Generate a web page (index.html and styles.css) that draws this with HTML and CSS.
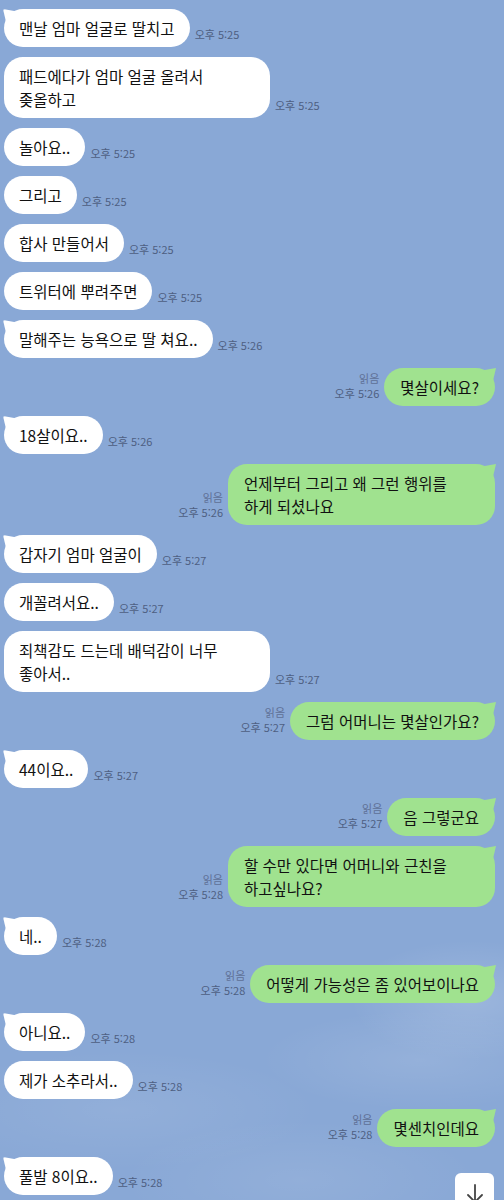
FILE: index.html
```html
<!DOCTYPE html>
<html lang="ko">
<head>
<meta charset="utf-8">
<link rel="stylesheet" href="styles.css">
</head>
<body>
<div class="chat">
  <div class="row in"><div class="bubble tail">맨날 엄마 얼굴로 딸치고</div><div class="meta"><span class="time">오후 5:25</span></div></div>
  <div class="row in"><div class="bubble wide">패드에다가 엄마 얼굴 올려서<br>좆올하고</div><div class="meta"><span class="time">오후 5:25</span></div></div>
  <div class="row in"><div class="bubble">놀아요..</div><div class="meta"><span class="time">오후 5:25</span></div></div>
  <div class="row in"><div class="bubble">그리고</div><div class="meta"><span class="time">오후 5:25</span></div></div>
  <div class="row in"><div class="bubble">합사 만들어서</div><div class="meta"><span class="time">오후 5:25</span></div></div>
  <div class="row in"><div class="bubble">트위터에 뿌려주면</div><div class="meta"><span class="time">오후 5:25</span></div></div>
  <div class="row in"><div class="bubble tail">말해주는 능욕으로 딸 쳐요..</div><div class="meta"><span class="time">오후 5:26</span></div></div>
  <div class="row out"><div class="meta"><span class="read">읽음</span><span class="time">오후 5:26</span></div><div class="bubble tail">몇살이세요?</div></div>
  <div class="row in"><div class="bubble tail">18살이요..</div><div class="meta"><span class="time">오후 5:26</span></div></div>
  <div class="row out"><div class="meta"><span class="read">읽음</span><span class="time">오후 5:26</span></div><div class="bubble tail wide">언제부터 그리고 왜 그런 행위를<br>하게 되셨나요</div></div>
  <div class="row in"><div class="bubble tail">갑자기 엄마 얼굴이</div><div class="meta"><span class="time">오후 5:27</span></div></div>
  <div class="row in"><div class="bubble">개꼴려서요..</div><div class="meta"><span class="time">오후 5:27</span></div></div>
  <div class="row in"><div class="bubble wide">죄책감도 드는데 배덕감이 너무<br>좋아서..</div><div class="meta"><span class="time">오후 5:27</span></div></div>
  <div class="row out"><div class="meta"><span class="read">읽음</span><span class="time">오후 5:27</span></div><div class="bubble tail">그럼 어머니는 몇살인가요?</div></div>
  <div class="row in"><div class="bubble tail">44이요..</div><div class="meta"><span class="time">오후 5:27</span></div></div>
  <div class="row out"><div class="meta"><span class="read">읽음</span><span class="time">오후 5:27</span></div><div class="bubble tail">음 그렇군요</div></div>
  <div class="row out"><div class="meta"><span class="read">읽음</span><span class="time">오후 5:28</span></div><div class="bubble tail wide">할 수만 있다면 어머니와 근친을<br>하고싶나요?</div></div>
  <div class="row in"><div class="bubble tail">네..</div><div class="meta"><span class="time">오후 5:28</span></div></div>
  <div class="row out"><div class="meta"><span class="read">읽음</span><span class="time">오후 5:28</span></div><div class="bubble tail">어떻게 가능성은 좀 있어보이나요</div></div>
  <div class="row in"><div class="bubble tail">아니요..</div><div class="meta"><span class="time">오후 5:28</span></div></div>
  <div class="row in"><div class="bubble">제가 소추라서..</div><div class="meta"><span class="time">오후 5:28</span></div></div>
  <div class="row out"><div class="meta"><span class="read">읽음</span><span class="time">오후 5:28</span></div><div class="bubble tail">몇센치인데요</div></div>
  <div class="row in"><div class="bubble tail">풀발 8이요..</div><div class="meta"><span class="time">오후 5:28</span></div></div>
</div>
<button class="scroll-down" aria-label="아래로">
  <svg width="20" height="22" viewBox="0 0 20 22"><path d="M10 2 V19 M3 12 L10 19 L17 12" fill="none" stroke="#444" stroke-width="1.8" stroke-linecap="round" stroke-linejoin="round"/></svg>
</button>
</body>
</html>
```

FILE: styles.css
```css
html, body {
  margin: 0;
  padding: 0;
}
body {
  width: 504px;
  height: 1200px;
  overflow: hidden;
  position: relative;
  background-color: #89a8d6;
  background-image:
    radial-gradient(ellipse 120px 60px at 470px 1000px, rgba(255,255,255,0.16), rgba(255,255,255,0)),
    radial-gradient(ellipse 160px 50px at 420px 1060px, rgba(255,255,255,0.10), rgba(255,255,255,0)),
    radial-gradient(ellipse 200px 60px at 120px 1110px, rgba(255,255,255,0.08), rgba(255,255,255,0)),
    radial-gradient(ellipse 180px 60px at 300px 1180px, rgba(255,255,255,0.08), rgba(255,255,255,0));
  font-family: "Noto Sans CJK KR", "Noto Sans", sans-serif;
}
.chat {
  display: flex;
  flex-direction: column;
  gap: 10px;
  padding: 9px 9px 0 4px;
}
.row {
  display: flex;
  align-items: flex-end;
  gap: 5px;
}
.row.out {
  justify-content: flex-end;
}
.bubble {
  position: relative;
  box-sizing: border-box;
  max-width: 266px;
  padding: 8px 15px 7px;
  border-radius: 19px;
  font-size: 15.5px;
  line-height: 23px;
  color: #111;
  background: #ffffff;
}
.bubble.wide {
  width: 266px;
}
.row.out .bubble {
  background: #a0e28f;
  padding: 8px 16px 7px;
}
.row.out .bubble.wide {
  width: 267px;
  max-width: 267px;
}
.bubble.tail::before {
  content: "";
  position: absolute;
  top: 0;
  width: 14px;
  height: 12px;
  background: inherit;
}
.row.in .bubble.tail::before {
  left: -1px;
  clip-path: polygon(0 0, 100% 20%, 100% 100%, 20% 100%);
  border-top-left-radius: 2px;
}
.row.out .bubble.tail::before {
  right: -1px;
  clip-path: polygon(100% 0, 0 20%, 0 100%, 80% 100%);
}
.meta {
  display: flex;
  flex-direction: column;
  padding-bottom: 5px;
  font-size: 11px;
  line-height: 15px;
  white-space: nowrap;
}
.row.out .meta {
  align-items: flex-end;
}
.time {
  color: #4e5f82;
}
.read {
  color: #5f7096;
}
.scroll-down {
  position: absolute;
  left: 455px;
  top: 1173px;
  width: 39px;
  height: 40px;
  padding: 10px 0 0;
  border: none;
  border-radius: 6px;
  background: #fff;
  display: flex;
  justify-content: center;
  align-items: flex-start;
}
```
